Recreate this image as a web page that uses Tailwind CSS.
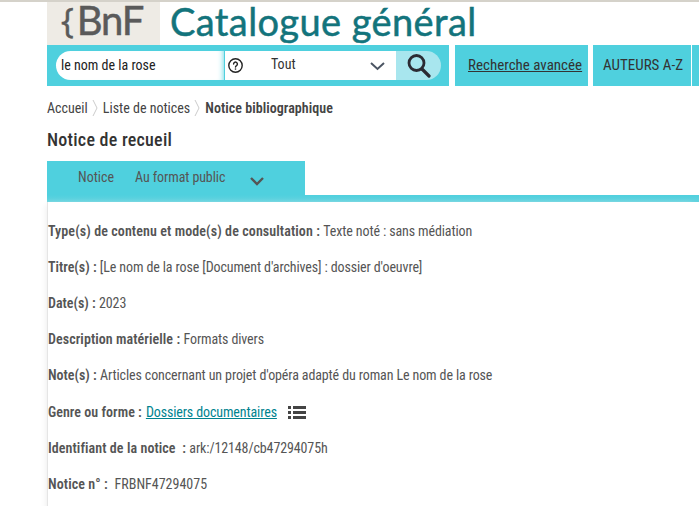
<!DOCTYPE html>
<html lang="fr">

<head>
  <meta charset="UTF-8" />
  <title>Notice de recueil</title>
  <script src="https://cdn.jsdelivr.net/npm/@tailwindcss/browser@4"></script>
</head>

<body class="bg-white h-[506px] w-[699px] overflow-hidden border-t-2 border-[#d5d2ca] font-['Roboto_Condensed','Roboto',sans-serif] [font-stretch:75%] text-[14px] text-[#444]">

  <header class="pl-[47px] flex items-stretch h-[43px] font-['Lato',sans-serif] [font-stretch:100%]">
    <div class="w-[113px] bg-[#eeebe5] flex items-start pl-[14px] text-[#5a5a5a] text-[40px] leading-[36px] [-webkit-text-stroke:0.5px_#5a5a5a]">
      <span class="mr-[3px] font-['Open_Sans',sans-serif] text-[34px]">{</span><span class="tracking-[-1.2px]">BnF</span>
    </div>
    <div class="ml-[10px] text-[38px] leading-[39px] tracking-[0.4px] text-[#13747c] [-webkit-text-stroke:0.5px_#13747c]">Catalogue général</div>
  </header>

  <nav class="pl-[47px] flex h-[41px] text-[#333]">
    <form class="w-[402px] bg-[#4fd0de] flex items-center pl-[9px] pr-[8px]">
      <div class="w-[168px] h-[29px] bg-white rounded-l-[15px] flex items-center pl-[5px] text-[14px] text-[#222] shadow-[inset_-6px_0_6px_-6px_#4fd0de]">le nom de la rose</div>
      <div class="w-[172px] h-[29px] bg-white border-l border-[#4fd0de] flex items-center relative">
        <svg class="ml-[3px]" width="15" height="15" viewBox="0 0 15 15" fill="none" stroke="#222" stroke-width="1.4">
          <circle cx="7.5" cy="7.5" r="6.7" />
          <path d="M5.6 6a1.9 1.9 0 1 1 2.9 1.6c-.7.4-1 .8-1 1.5" stroke-linecap="round" />
          <path d="M7.5 10.4v1.3" />
        </svg>
        <span class="ml-[28px] text-[14px] -mt-[2px]">Tout</span>
        <svg class="absolute left-[145px] top-[11px]" width="15" height="9" viewBox="0 0 15 9" fill="none" stroke="#4b5563" stroke-width="2">
          <path d="M1 1l6.5 6L14 1" />
        </svg>
      </div>
      <div class="w-[45px] h-[29px] bg-[#a8e6ee] rounded-r-[15px] flex items-center pl-[11px]">
        <svg width="24" height="26" viewBox="0 0 24 26" fill="none" stroke="#2b2b33" stroke-linecap="round">
          <circle cx="9.5" cy="10" r="7.5" stroke-width="2.8" />
          <path d="M15 16l7 7" stroke-width="3.2" />
        </svg>
      </div>
    </form>
    <a class="ml-[6px] w-[133px] bg-[#4fd0de] flex items-center pl-[13px] underline text-[15px]">Recherche avancée</a>
    <a class="ml-[5px] w-[98px] bg-[#4fd0de] flex items-center pl-[10px] text-[15px]">AUTEURS A-Z</a>
    <div class="ml-px flex-1 bg-[#4fd0de]"></div>
  </nav>

  <div class="pl-[47px] pt-[4px] flex items-center h-[40px] text-[14px] leading-none">
    <span>Accueil</span>
    <svg class="ml-[4px] mr-[5px]" width="6" height="20" viewBox="0 0 6 20" fill="none" stroke="#ccc"><path d="M1 2l4 8-4 8" /></svg>
    <span>Liste de notices</span>
    <svg class="ml-[4px] mr-[5px]" width="6" height="20" viewBox="0 0 6 20" fill="none" stroke="#ccc"><path d="M1 2l4 8-4 8" /></svg>
    <span class="font-semibold tracking-[0.05px]">Notice bibliographique</span>
  </div>

  <h1 class="pl-[47px] mt-px h-[34px] text-[18px] leading-[26px] font-medium tracking-[0.25px] text-[#333]">Notice de recueil</h1>

  <div class="pl-[47px] h-[34px]">
    <div class="w-[258px] h-[34px] bg-[#4fd0de] flex items-start pl-[31px] pt-[6px] text-[14px] leading-[20px] text-[#555]">
      <span>Notice</span>
      <span class="ml-[21px] tracking-[-0.1px]">Au format public</span>
      <svg class="ml-[25px] mt-[10px]" width="14" height="9" viewBox="0 0 14 9" fill="none" stroke="#555" stroke-width="2.4"><path d="M1 1l6 6 6-6" /></svg>
    </div>
  </div>
  <div class="h-[7px] bg-gradient-to-b from-[#4fd0de] to-[#64d3df] ml-[47px]"></div>

  <main class="ml-[47px] border-l border-[#e5e5e5] shadow-[-4px_0_6px_-3px_#eeeeee] pt-[19px] flex flex-col gap-[16px] h-[320px] text-[14px] leading-[20px] text-[#555] tracking-[-0.12px]">
    <p><b class="font-semibold tracking-[0.1px]">Type(s) de contenu et mode(s) de consultation : </b>Texte noté : sans médiation</p>
    <p><b class="font-semibold tracking-normal">Titre(s) : </b>[Le nom de la rose [Document d'archives] : dossier d'oeuvre]</p>
    <p><b class="font-semibold tracking-normal">Date(s) : </b>2023</p>
    <p><b class="font-semibold tracking-[0.08px]">Description matérielle : </b>Formats divers</p>
    <p><b class="font-semibold tracking-normal">Note(s) : </b>Articles concernant un projet d'opéra adapté du roman Le nom de la rose</p>
    <p class="flex items-center mt-px"><b class="font-semibold tracking-[0.04px] mr-1">Genre ou forme : </b><a class="underline text-[#00838f]">Dossiers documentaires</a>
      <svg class="ml-[11px]" width="18" height="15" viewBox="0 0 18 15" fill="#444"><rect x="0" y="1" width="3" height="3"/><rect x="5" y="1" width="13" height="3"/><rect x="0" y="6" width="3" height="3"/><rect x="5" y="6" width="13" height="3"/><rect x="0" y="11" width="3" height="3"/><rect x="5" y="11" width="13" height="3"/></svg>
    </p>
    <p><b class="font-semibold tracking-[0.08px]">Identifiant de la notice &nbsp;: </b>ark:/12148/cb47294075h</p>
    <p class="tracking-normal"><b class="font-semibold tracking-[0.1px]">Notice n° : &nbsp;</b>FRBNF47294075</p>
  </main>

</body>

</html>
